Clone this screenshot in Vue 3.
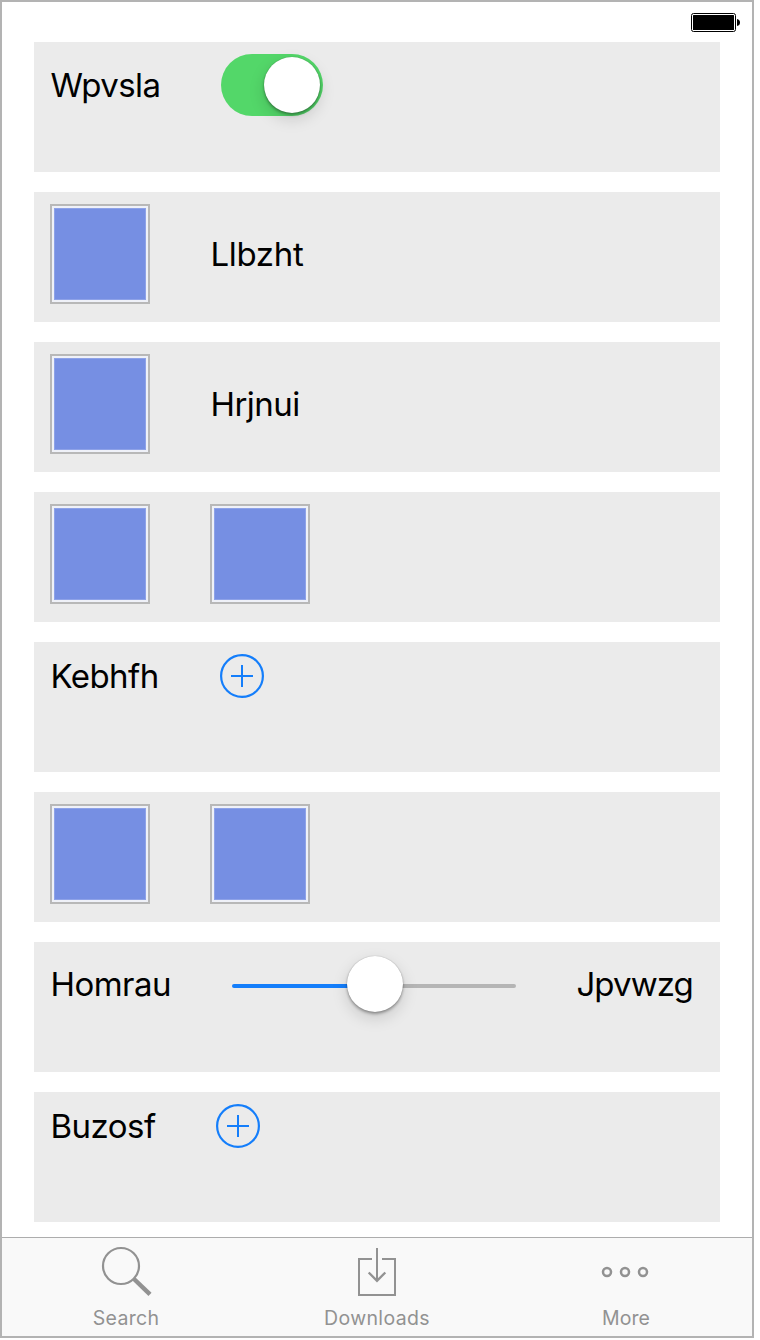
<script setup>
const rows = [
  [{ type: 'label', text: 'Wpvsla', cls: 'w-a' }, { type: 'switch' }],
  [{ type: 'box' }, { type: 'label', text: 'Llbzht', cls: 'w-b' }],
  [{ type: 'box' }, { type: 'label', text: 'Hrjnui', cls: 'w-c' }],
  [{ type: 'box' }, { type: 'box' }],
  [{ type: 'label', text: 'Kebhfh', cls: 'w-d' }, { type: 'add' }],
  [{ type: 'box' }, { type: 'box' }],
  [{ type: 'label', text: 'Homrau', cls: 'w-e' }, { type: 'slider' }, { type: 'label', text: 'Jpvwzg', cls: 'w-f' }],
  [{ type: 'label', text: 'Buzosf', cls: 'w-g' }, { type: 'add' }],
]
</script>

<template>
  <div class="phone">
    <header class="status">
      <svg width="50" height="20" viewBox="0 0 50 20">
        <rect x="0.5" y="0.5" width="44" height="18" rx="2" fill="#fff" stroke="#000" />
        <rect x="2" y="2" width="41" height="15" rx="0.5" fill="#000" />
        <path d="M46 6 Q49 6.5 49 9.5 Q49 12.5 46 13 Z" fill="#000" />
      </svg>
    </header>
    <main class="list">
      <section v-for="(row, i) in rows" :key="i" class="row">
        <div class="items">
          <template v-for="(item, j) in row" :key="j">
            <span v-if="item.type === 'label'" class="label" :class="item.cls">{{ item.text }}</span>
            <div v-else-if="item.type === 'switch'" class="switch"><i class="knob"></i></div>
            <div v-else-if="item.type === 'box'" class="box"></div>
            <svg v-else-if="item.type === 'add'" class="add" width="44" height="44" viewBox="0 0 44 44" fill="none" stroke="#147efb" stroke-width="2">
              <circle cx="22" cy="22" r="20.9" stroke-width="2.2" />
              <path d="M11 22H33M22 11V33" />
            </svg>
            <div v-else class="slider"><i class="track"></i><i class="knob"></i></div>
          </template>
        </div>
      </section>
    </main>
    <nav class="tabs">
      <div class="tab">
        <svg width="60" height="54" viewBox="0 0 60 54" fill="none" stroke="#929292">
          <circle cx="25" cy="28" r="18" stroke-width="2.2" />
          <path d="M38 41L54 56.4" stroke-width="4.4" />
        </svg>
        <span class="t-search">Search</span>
      </div>
      <div class="tab">
        <svg width="60" height="54" viewBox="0 0 60 54" fill="none" stroke="#929292" stroke-width="2">
          <path d="M26 21H13V57H49V21H36M31 10V43" />
          <path d="M22.7 34.5L31 42.8L39.3 34.5" stroke-width="2.4" />
        </svg>
        <span class="t-down">Downloads</span>
      </div>
      <div class="tab">
        <svg width="60" height="54" viewBox="0 0 60 54" fill="none" stroke="#929292" stroke-width="2.5">
          <circle cx="11" cy="34" r="4" />
          <circle cx="29" cy="34" r="4" />
          <circle cx="47" cy="34" r="4" />
        </svg>
        <span class="t-more">More</span>
      </div>
    </nav>
  </div>
</template>

<style>
body { background: #fff; }
</style>

<style scoped>
.phone {
  box-sizing: border-box;
  width: 754px;
  height: 1338px;
  border: 2px solid #b3b3b3;
  background: #fff;
  font-family: Inter, "Liberation Sans", sans-serif;
  display: flex;
  flex-direction: column;
}
.status {
  height: 40px;
  box-sizing: border-box;
  padding: 11px 11px 0 0;
  display: flex;
  justify-content: flex-end;
}
.list {
  display: flex;
  flex-direction: column;
  gap: 20px;
  padding: 0 32px;
  height: 1195px;
}
.row {
  box-sizing: border-box;
  height: 130px;
  flex: none;
  padding: 12px 16px;
  background: #ebebeb;
}
.items { display: flex; align-items: center; gap: 60px; }
.label {
  font-size: 33px;
  line-height: 40px;
  color: #000;
  white-space: nowrap;
  flex: none;
  text-indent: 0.4px;
}
.w-a { width: 111px; letter-spacing: -0.6px; text-indent: 0.5px; }
.w-b { letter-spacing: -0.3px; }
.w-c { letter-spacing: -0.5px; }
.w-d { width: 110px; letter-spacing: -0.55px; }
.w-e { width: 122px; letter-spacing: -0.5px; }
.w-f { letter-spacing: -0.9px; }
.w-g { width: 106px; letter-spacing: -0.5px; }
.box {
  box-sizing: border-box;
  width: 100px;
  height: 100px;
  border: 2px solid #b8b8b8;
  background: #768fe3;
  box-shadow: inset 0 0 0 2px #eff1f8, inset 0 0 0 3px #8ea2e8;
}
.switch {
  box-sizing: border-box;
  width: 102px;
  height: 62px;
  border-radius: 31px;
  background: #53d769;
  padding: 3px;
  display: flex;
  justify-content: flex-end;
}
.knob {
  display: block;
  width: 56px;
  height: 56px;
  border-radius: 50%;
  background: #fff;
  box-shadow: 0 6px 16px rgba(0, 0, 0, 0.15), 0 2px 3px rgba(0, 0, 0, 0.32), 0 0 1px rgba(0, 0, 0, 0.3);
}
.slider {
  width: 284px;
  height: 60px;
  display: grid;
  justify-items: center;
  align-items: center;
}
.slider > i { grid-area: 1 / 1; }
.slider .knob { z-index: 1; margin-left: 2px; }
.track {
  width: 100%;
  height: 4px;
  margin-top: 4px;
  border-radius: 2px;
  background: linear-gradient(to right, #147efb 50%, #b5b5b5 50%);
}
.tabs {
  flex: 1;
  border-top: 1px solid #adadad;
  background: #f9f9f9;
  display: flex;
  justify-content: space-between;
  padding: 0 56px 0 54px;
}
.tab {
  width: 140px;
  display: flex;
  flex-direction: column;
  align-items: center;
  color: #929292;
  font-size: 19.5px;
  line-height: 24px;
}
.tab svg { overflow: visible; height: 54px; flex: none; }
.tab span { margin-top: 14px; white-space: nowrap; }
.t-search { letter-spacing: 0.3px; }
.t-down { letter-spacing: 0.35px; padding-left: 2px; }
.t-more { letter-spacing: 0.1px; }
</style>
